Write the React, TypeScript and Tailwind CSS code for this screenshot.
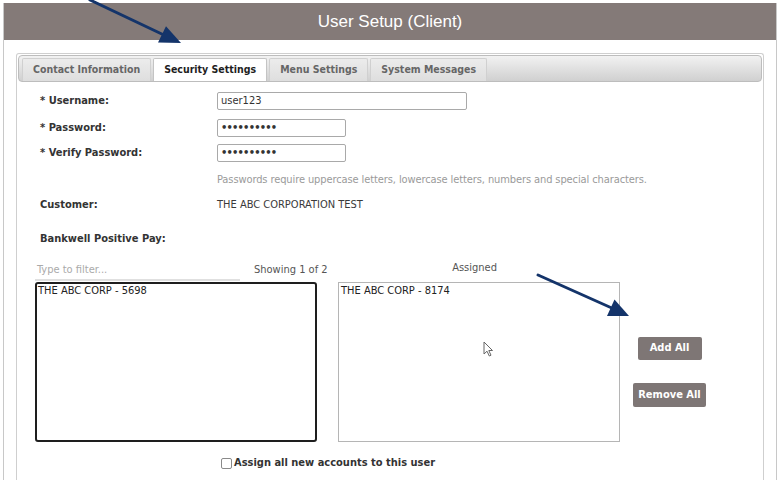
const TABS = [
  { label: 'Contact Information', active: false },
  { label: 'Security Settings', active: true },
  { label: 'Menu Settings', active: false },
  { label: 'System Messages', active: false },
]

const FIELDS = [
  { label: 'Username:', value: 'user123', wide: true, mt: 'mt-[10px]' },
  { label: 'Password:', value: '••••••••••', wide: false, mt: 'mt-[9px]' },
  { label: 'Verify Password:', value: '••••••••••', wide: false, mt: 'mt-[7px]' },
]

function Arrows() {
  return (
    <svg className="absolute inset-0 pointer-events-none" width="778" height="480" viewBox="0 0 778 480">
      <g stroke="#14346a" strokeWidth="3" strokeLinecap="round" fill="#14346a">
        <line x1="90" y1="0" x2="166" y2="36" />
        <polygon points="181,43 158,42.5 166,26.3" stroke="none" />
        <line x1="538" y1="275" x2="614" y2="309" />
        <polygon points="629,316 607,316 614.5,299.6" stroke="none" />
      </g>
    </svg>
  )
}

export default function App() {
  return (
    <div className="relative w-[778px] h-[480px] bg-white overflow-hidden font-['DejaVu_Sans_Condensed','DejaVu_Sans',sans-serif] text-[#333]">
      <div className="ml-[3px] mt-[3px] w-[774px] h-[477px] border-x border-[#c8c8c8]">
        {/* Header */}
        <div className="h-[37px] bg-[#847a78] flex items-center justify-center">
          <span className="font-['Liberation_Sans',Arial,sans-serif] text-[17px] text-white">User Setup (Client)</span>
        </div>

        {/* Panel */}
        <div className="mt-[13px] ml-[12px] w-[748px] h-[430px] border border-b-0 border-[#cfcfcf] rounded-t-[3px] px-px pt-px">
          {/* Tab strip */}
          <div className="h-[27px] rounded-[4px] border border-[#bdbdbd] bg-gradient-to-b from-[#f2f2f2] to-[#d0d0d0] flex items-end pl-[3px] gap-[2px]">
            {TABS.map(tab => (
              <div
                key={tab.label}
                className={`h-[23px] px-[10px] flex items-center rounded-t-[2px] text-[10.5px] font-bold ${
                  tab.active
                    ? 'bg-white text-[#1e1e1e] border border-b-0 border-[#c4c4c4]'
                    : 'bg-gradient-to-b from-[#ececec] to-[#dedede] text-[#666] border border-b-0 border-[#d0d0d0]'
                }`}
              >
                {tab.label}
              </div>
            ))}
          </div>

          {/* Fields */}
          <div className="pl-[22px]">
            {FIELDS.map(f => (
              <div key={f.label} className={`flex items-center ${f.mt}`}>
                <div className="w-[177px] text-[11px] font-bold text-[#333]">* {f.label}</div>
                <div
                  className={`h-[18px] border border-[#a9a9a9] rounded-[2px] flex items-center px-[3px] text-[11px] text-[#333] ${
                    f.wide ? 'w-[250px]' : 'w-[129px] font-bold tracking-[-0.8px]'
                  }`}
                >
                  {f.value}
                </div>
              </div>
            ))}
            <div className="mt-[11px] pl-[177px] text-[11px] text-[#9a9a9a] leading-[14px] tracking-[-0.1px]">
              Passwords require uppercase letters, lowercase letters, numbers and special characters.
            </div>
            <div className="mt-[11px] flex text-[11px] leading-[14px]">
              <div className="w-[177px] font-bold">Customer:</div>
              <div className="text-[#3a3a3a]">THE ABC CORPORATION TEST</div>
            </div>
            <div className="mt-[20px] text-[11px] font-bold leading-[14px]">Bankwell Positive Pay:</div>
          </div>

          {/* Account picker */}
          <div className="pl-[17px]">
            <div className="mt-[14px] flex items-end h-[21px]">
              <div className="w-[205px] h-[20px] border-b-2 border-[#e0e0e0] text-[11px] text-[#aaa] flex items-center pl-[2px]">
                Type to filter...
              </div>
              <div className="ml-[14px] h-[21px] flex items-center text-[11px] text-[#555]">Showing 1 of 2</div>
              <div className="ml-[13px] w-[282px] h-[21px] flex items-center justify-center text-[11px] text-[#555] pb-[5px] pr-[14px]">
                Assigned
              </div>
            </div>

            <div className="mt-[1px] flex">
              <div className="w-[282px] h-[160px] border-2 border-[#1e1e1e] rounded-[3px] text-[11px] text-[#222] px-px leading-[14px]">
                THE ABC CORP - 5698
              </div>
              <div className="relative ml-[21px] w-[282px] h-[160px] border border-[#b5b5b5] text-[11px] text-[#222] px-[2px] pt-px leading-[14px]">
                THE ABC CORP - 8174
                <svg className="absolute left-[144px] top-[58px]" width="11" height="16" viewBox="0 0 11 16">
                  <path d="M1 1 L1 13 L4 10.2 L6.3 15 L8 14.2 L5.8 9.5 L9.5 9.5 Z" fill="white" stroke="#666" strokeWidth="1" strokeLinejoin="round" />
                </svg>
              </div>
              <div className="ml-[13px] w-[73px] flex flex-col items-center pt-[55px]">
                <div className="w-[64px] h-[23px] rounded-[2px] bg-[#7e7675] text-white text-[11px] font-bold flex items-center justify-center">
                  Add All
                </div>
                <div className="mt-[23px] w-[73px] h-[24px] rounded-[2px] bg-[#7e7675] text-white text-[11px] font-bold flex items-center justify-center">
                  Remove All
                </div>
              </div>
            </div>

            <div className="mt-[13px] pl-[186px] flex items-center gap-[2px]">
              <div className="w-[11px] h-[11px] border border-[#8a8a8a] rounded-[2px] bg-white" />
              <span className="text-[11px] font-bold text-[#333]">Assign all new accounts to this user</span>
            </div>
          </div>
        </div>
      </div>
      <Arrows />
    </div>
  )
}
